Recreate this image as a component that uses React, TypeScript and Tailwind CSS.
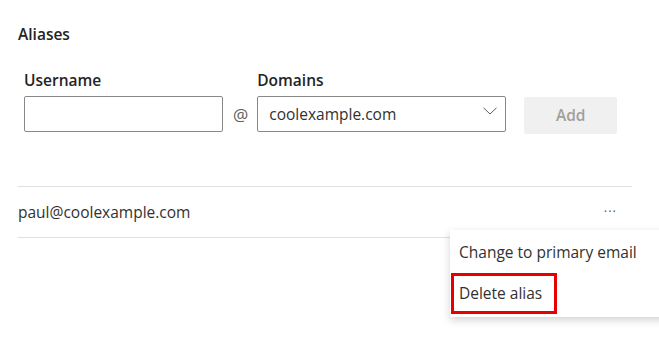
import React from "react";

const font = { fontFamily: '"Open Sans", "Noto Sans", sans-serif' };

function Chevron() {
  return (
    <svg width="14" height="8" viewBox="0 0 14 8" fill="none" className="text-[#605e5c]">
      <path d="M0.5 0.8 L7 7 L13.5 0.8" stroke="currentColor" strokeWidth="1" />
    </svg>
  );
}

export default function App() {
  return (
    <div className="relative h-[351px] w-[659px] overflow-hidden bg-white text-[#242424]" style={font}>
      <div className="pl-[18px] pt-[24px]">
        <h2 className="text-[15.5px] font-semibold leading-[20px]">Aliases</h2>

        {/* add alias form */}
        <div className="mt-[26px] flex items-end pl-[6px]">
          <div className="flex flex-col">
            <label className="mb-[6px] text-[15.5px] font-semibold leading-[20px]">Username</label>
            <input className="h-[36px] w-[199px] rounded-[2px] border border-[#8a8886] px-2 outline-none" />
          </div>
          <span className="ml-[10px] mr-[9px] mb-[7px] text-[17px] leading-[20px] text-[#605e5c]">@</span>
          <div className="flex flex-col">
            <label className="mb-[6px] text-[15.5px] font-semibold leading-[20px]">Domains</label>
            <div className="flex h-[36px] w-[249px] items-center justify-between rounded-[2px] border border-[#8a8886] pl-[11px] pr-[8px]">
              <span className="pt-[2px] text-[15.5px] text-[#323130]">coolexample.com</span>
              <span className="-mt-[6px]">
                <Chevron />
              </span>
            </div>
          </div>
          <button className="-mb-[2px] ml-[18px] h-[37px] w-[93px] rounded-[2px] bg-[#f0f0f0] pt-[1px] text-[15.5px] font-semibold text-[#a19f9d]">
            Add
          </button>
        </div>

        {/* aliases list */}
        <div className="mt-[54px] w-[614px] border-t border-[#e1dfdd]">
          <div className="flex h-[51px] items-center justify-between border-b border-[#e1dfdd]">
            <span className="pt-[2px] text-[15.5px] text-[#323130]">paul@coolexample.com</span>
            <span className="mr-[15px] text-[13px] tracking-[1px] text-[#605e5c]">···</span>
          </div>
        </div>
      </div>

      {/* context menu */}
      <div className="absolute left-[450px] top-[230px] w-[230px] bg-white py-[2px] shadow-[0_3px_8px_rgba(0,0,0,0.18)]">
        <div className="flex h-[41px] items-center px-[9px] pt-[1px] text-[15.5px] text-[#323130]">Change to primary email</div>
        <div className="flex h-[42px] items-center px-[9px] text-[15.5px] text-[#323130]">Delete alias</div>
      </div>
      <div className="absolute left-[451px] top-[273px] h-[41px] w-[106px] border-[3px] border-[#e60000]" />
    </div>
  );
}
